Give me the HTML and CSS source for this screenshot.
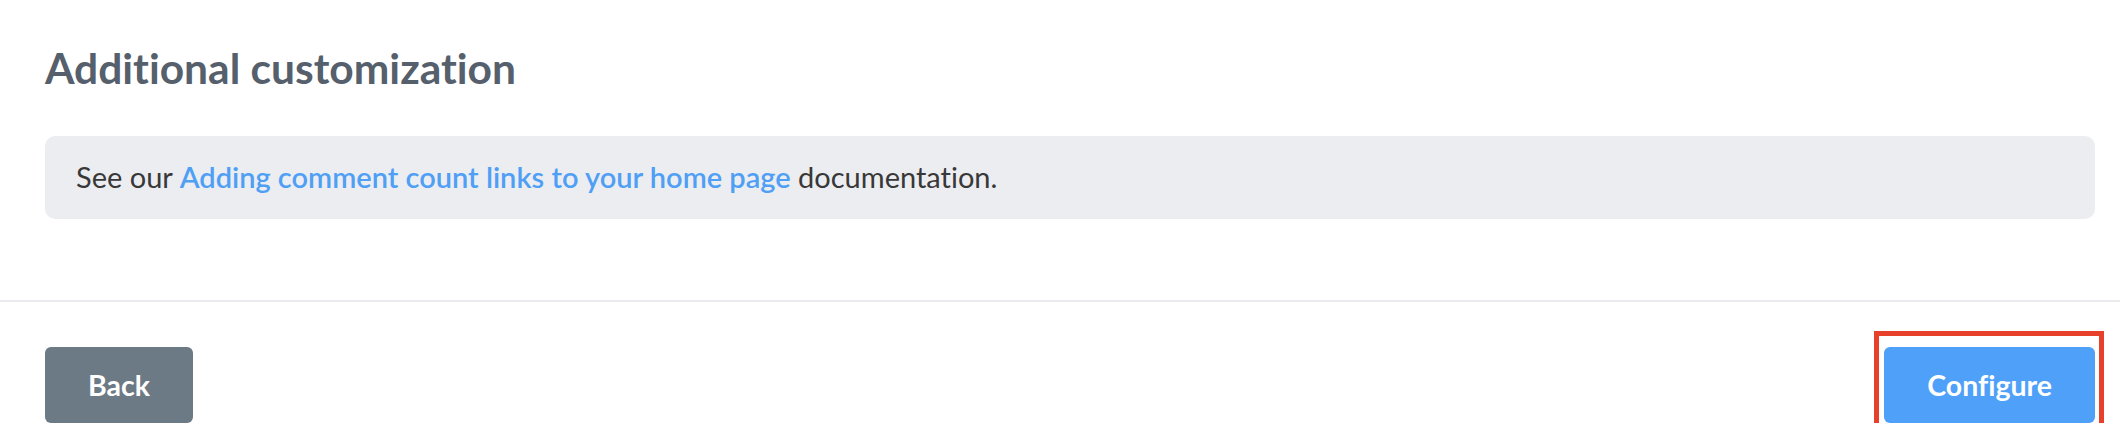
FILE: index.html
```html
<!DOCTYPE html>
<html lang="en">
<head>
<meta charset="utf-8">
<title>Additional customization</title>
<link rel="stylesheet" href="styles.css">
</head>
<body>
<main class="page">
  <section class="content">
    <h1 class="title">Additional customization</h1>
    <div class="note">See our <a class="note-link" href="#">Adding comment count links to your home page</a> documentation.</div>
  </section>
  <footer class="actions">
    <button class="btn btn-back" type="button">Back</button>
    <div class="highlight">
      <button class="btn btn-primary" type="button">Configure</button>
    </div>
  </footer>
</main>
</body>
</html>
```
FILE: styles.css
```css
html, body {
  margin: 0;
  padding: 0;
  background: #ffffff;
}
body {
  font-family: "Lato", "Open Sans", sans-serif;
  font-variant-ligatures: none;
  color: #3a3a3a;
}
.page {
  display: flex;
  flex-direction: column;
}
.content {
  padding: 42px 25px 0 45px;
}
.title {
  margin: 0;
  font-size: 42.5px;
  line-height: 1.2;
  font-weight: 700;
  color: #55606c;
}
.note {
  margin-top: 43px;
  background: #ecedf1;
  border-radius: 10px;
  padding: 24px 31px;
  font-size: 29px;
  line-height: 1.2;
  color: #383838;
}
.note-link {
  color: #4f9ff5;
  font-weight: 600;
  text-decoration: none;
}
.actions {
  margin-top: 81px;
  border-top: 2px solid #ebebef;
  padding: 45px 25px 0 45px;
  display: flex;
  justify-content: space-between;
  align-items: flex-start;
}
.btn {
  display: block;
  font-family: "Lato", "Open Sans", sans-serif;
  font-variant-ligatures: none;
  font-size: 28.5px;
  font-weight: 700;
  line-height: 1.2;
  color: #ffffff;
  border: 0;
  border-radius: 6px;
  height: 76px;
  padding: 1px 43px 0;
  margin: 0;
  cursor: pointer;
}
.btn-back {
  background: #6c7a86;
}
.btn-primary {
  background: #4fa0f8;
}
.highlight {
  margin: -16px -9px -17px -10px;
  padding: 11px 4px 12px 5px;
  border: 5px solid #e8412b;
}
```
